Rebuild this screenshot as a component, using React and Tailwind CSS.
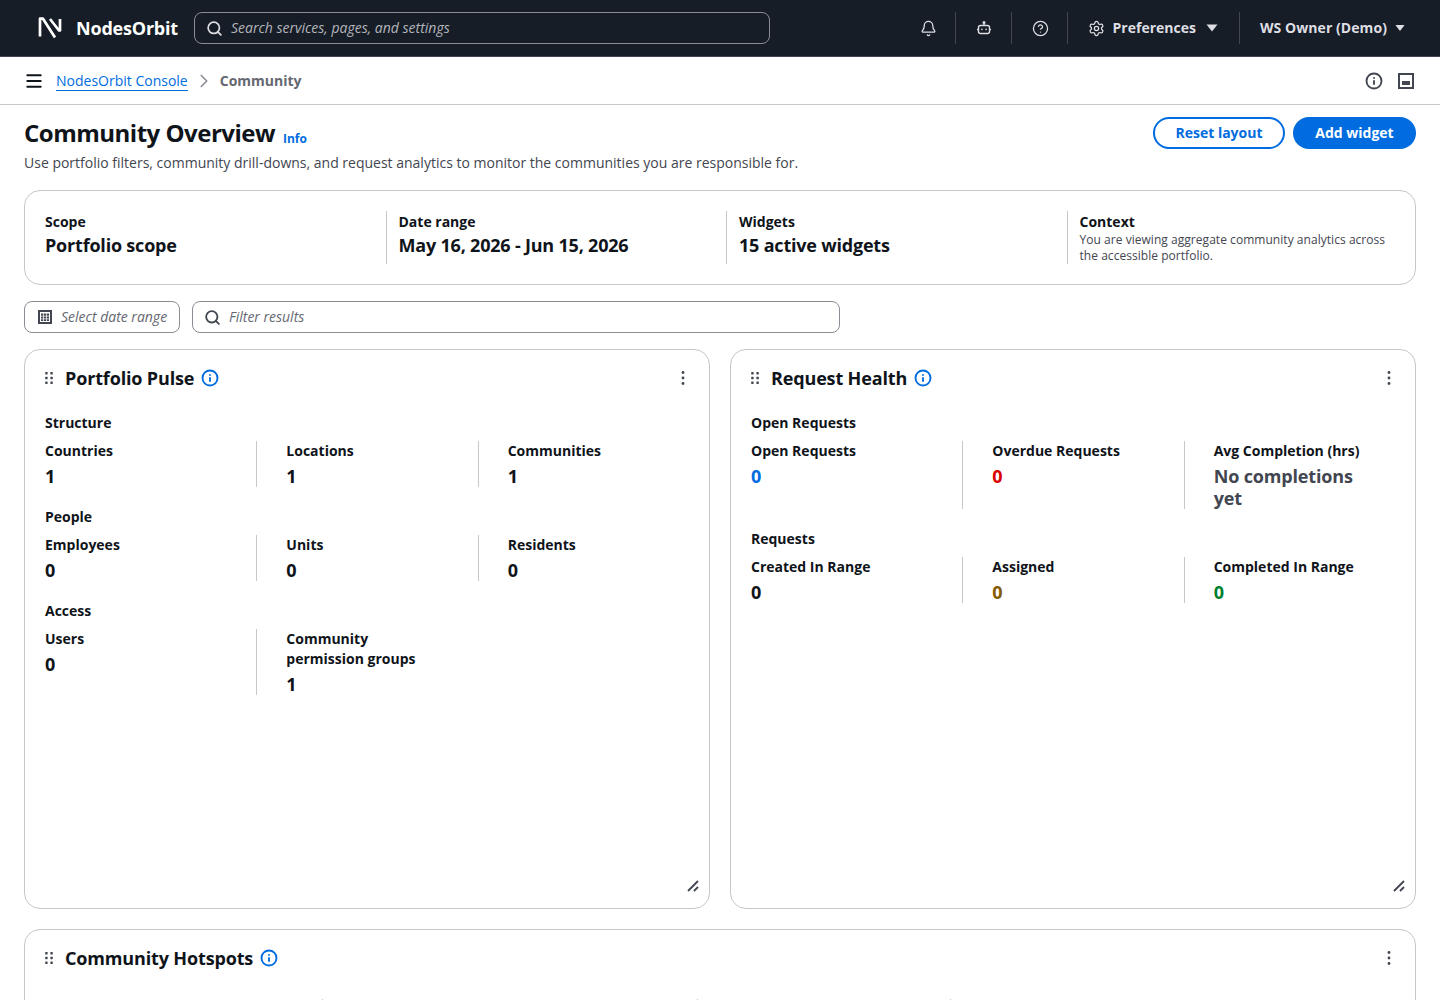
import { Bell, CircleHelp, Menu, Search, Settings, ChevronRight, Info } from 'lucide-react';

const NavDivider = () => <div className="h-8 w-px bg-[#424650]" />;

const Caret = ({ className }) => (
    <svg viewBox="0 0 12 8" className={className} fill="currentColor">
        <path d="M0.5 0.5h11L6 7.5z" />
    </svg>
);

const Logo = () => (
    <svg viewBox="0 0 24 22" className="h-[22px] w-6" fill="none" stroke="white" strokeWidth="2.7" strokeLinejoin="round">
        <path d="M2 19.5V1.7h3L17 20.5" />
        <path d="M12 2l9 11.5h1V2" />
    </svg>
);

const BotIcon = () => (
    <svg viewBox="0 0 16 16" className="ml-5 h-4 w-4" fill="none" stroke="currentColor" strokeWidth="1.4">
        <rect x="2.5" y="5.5" width="11" height="8" rx="2" />
        <path d="M8 2.5v3M1 9.5h1.5M13.5 9.5H15" />
        <circle cx="8" cy="2.5" r="0.8" fill="currentColor" />
        <rect x="5.2" y="8.6" width="1.4" height="1.6" fill="currentColor" stroke="none" />
        <rect x="9.4" y="8.6" width="1.4" height="1.6" fill="currentColor" stroke="none" />
    </svg>
);

const TopNav = () => (
    <div className="flex h-[57px] items-center border-b border-[#424650] bg-[#161d26] pl-[38px] pr-[35px]">
        <Logo />
        <span className="ml-[14px] text-[18px] font-bold tracking-[-0.2px] text-white">NodesOrbit</span>
        <div className="ml-4 flex h-8 w-[576px] items-center rounded-lg border border-[#8c8c94] pl-[11px]">
            <Search size={17} strokeWidth={2.4} className="text-[#dedee3]" />
            <span className="ml-2 text-sm italic text-[#b4b4bb]">Search services, pages, and settings</span>
        </div>
        <div className="ml-auto flex items-center text-[#dedee3]">
            <Bell size={17} strokeWidth={1.8} />
            <div className="ml-[18px]"><NavDivider /></div>
            <BotIcon />
            <div className="ml-[19px]"><NavDivider /></div>
            <CircleHelp size={17} strokeWidth={1.8} className="ml-[20px]" />
            <div className="ml-[18px]"><NavDivider /></div>
            <Settings size={17} strokeWidth={1.8} className="ml-[20px]" />
            <span className="ml-2 text-sm font-bold">Preferences</span>
            <Caret className="ml-[10px] h-2 w-3" />
            <div className="ml-[21px]"><NavDivider /></div>
            <span className="ml-5 text-sm font-bold tracking-[0.07px]">WS Owner (Demo)</span>
            <Caret className="ml-2 h-2 w-2.5" />
        </div>
    </div>
);

const Breadcrumbs = () => (
    <div className="flex h-[48px] items-center border-b border-[#c6c6cd] pl-[26px] pr-[26px] text-sm">
        <Menu size={16} strokeWidth={2.4} className="scale-125 text-[#0f141a]" />
        <a className="ml-[14px] border-b border-[#006ce0] pt-0.5 leading-[18px] text-[#006ce0]">NodesOrbit Console</a>
        <ChevronRight size={22} strokeWidth={1.8} className="ml-[5px] text-[#8c8c94]" />
        <span className="ml-[5px] font-bold text-[#656871]">Community</span>
        <Info size={18} strokeWidth={2.5} className="ml-auto text-[#424650]" />
        <div className="ml-[15px] flex h-4 w-4 items-end border-2 border-[#424650] p-0.5">
            <div className="h-1 w-full bg-[#424650]" />
        </div>
    </div>
);

const SummaryCell = ({ label, value, first }) => (
    <div className={first ? '' : 'border-l border-[#c6c6cd] pl-3'}>
        <div className="pt-px text-sm font-bold leading-5 text-[#0f141a]">{label}</div>
        <div className="mt-0.5 text-[18px] font-bold leading-[22px] tracking-[-0.2px] text-[#0f141a]">{value}</div>
    </div>
);

const DragHandle = () => (
    <svg viewBox="0 0 16 16" className="-ml-1 h-4 w-4 text-[#424650]" fill="currentColor">
        <rect x="4.2" y="2" width="2.4" height="2.4" rx="0.4" /><rect x="9.4" y="2" width="2.4" height="2.4" rx="0.4" />
        <rect x="4.2" y="6.8" width="2.4" height="2.4" rx="0.4" /><rect x="9.4" y="6.8" width="2.4" height="2.4" rx="0.4" />
        <rect x="4.2" y="11.6" width="2.4" height="2.4" rx="0.4" /><rect x="9.4" y="11.6" width="2.4" height="2.4" rx="0.4" />
    </svg>
);

const Kebab = () => (
    <svg viewBox="0 0 16 16" className="h-4 w-4 text-[#424650]" fill="currentColor">
        <circle cx="8" cy="2.5" r="1.4" /><circle cx="8" cy="8" r="1.4" /><circle cx="8" cy="13.5" r="1.4" />
    </svg>
);

const WidgetHeader = ({ title }) => (
    <div className="flex h-[20px] items-center">
        <DragHandle />
        <h3 className="ml-2 text-[18px] font-bold leading-[22px] tracking-[-0.15px] text-[#0f141a]">{title}</h3>
        <Info size={18} strokeWidth={2.5} className="ml-[7px] text-[#006ce0]" />
        <div className="ml-auto mr-[-2px]"><Kebab /></div>
    </div>
);

const Metric = ({ label, value, color = 'text-[#0f141a]', index }) => (
    <div className={index === 0 ? 'pl-2.5 pr-9' : 'border-l border-[#c6c6cd] pl-[29px] pr-9'}>
        <div className="text-sm font-bold leading-5 text-[#0f141a]">{label}</div>
        <div className={`mt-1 text-[18px] font-bold leading-[22px] tracking-[-0.15px] ${color}`}>{value}</div>
    </div>
);

const Section = ({ title, metrics }) => (
    <div className="mb-5">
        <div className="mb-2 text-sm font-bold leading-5 text-[#0f141a]">{title}</div>
        <div className="-mx-2.5 grid grid-cols-3">
            {metrics.map((m, i) => <Metric key={m.label} index={i} {...m} />)}
        </div>
    </div>
);

const ResizeHandle = () => (
    <svg viewBox="0 0 12 12" className="absolute bottom-4 right-[10px] h-3 w-3 text-[#424650]" stroke="currentColor" strokeWidth="1.8">
        <path d="M1 11L11 1M7 11l4-4" />
    </svg>
);

const Widget = ({ title, sections }) => (
    <div className="relative h-[560px] rounded-2xl border border-[#c6c6cd] bg-white px-5 pt-[18px]">
        <WidgetHeader title={title} />
        <div className="mt-[25px]">
            {sections.map((s) => <Section key={s.title} {...s} />)}
        </div>
        <ResizeHandle />
    </div>
);

const portfolio = [
    { title: 'Structure', metrics: [{ label: 'Countries', value: '1' }, { label: 'Locations', value: '1' }, { label: 'Communities', value: '1' }] },
    { title: 'People', metrics: [{ label: 'Employees', value: '0' }, { label: 'Units', value: '0' }, { label: 'Residents', value: '0' }] },
    { title: 'Access', metrics: [{ label: 'Users', value: '0' }, { label: 'Community permission groups', value: '1' }] },
];

const requests = [
    {
        title: 'Open Requests',
        metrics: [
            { label: 'Open Requests', value: '0', color: 'text-[#006ce0]' },
            { label: 'Overdue Requests', value: '0', color: 'text-[#db0000]' },
            { label: 'Avg Completion (hrs)', value: 'No completions yet', color: 'text-[#424650]' },
        ],
    },
    {
        title: 'Requests',
        metrics: [
            { label: 'Created In Range', value: '0' },
            { label: 'Assigned', value: '0', color: 'text-[#855900]' },
            { label: 'Completed In Range', value: '0', color: 'text-[#00802f]' },
        ],
    },
];

export default function App() {
    return (
        <div className="h-screen overflow-hidden bg-white font-['Open_Sans',sans-serif] text-[#0f141a]">
            <TopNav />
            <Breadcrumbs />
            <div className="px-6">
                <div className="flex items-start justify-between pt-3">
                    <div>
                        <div className="flex items-baseline">
                            <h1 className="text-2xl font-bold leading-[32px] tracking-[-0.5px]">Community Overview</h1>
                            <a className="ml-2 translate-y-px text-xs font-bold text-[#006ce0]">Info</a>
                        </div>
                        <p className="mt-1 text-sm leading-5 text-[#424650]">
                            Use portfolio filters, community drill-downs, and request analytics to monitor the communities you are responsible for.
                        </p>
                    </div>
                    <div className="flex gap-2">
                        <button className="h-8 w-[132px] rounded-full border-2 border-[#006ce0] text-sm font-bold text-[#006ce0]">Reset layout</button>
                        <button className="h-8 w-[123px] rounded-full bg-[#006ce0] text-sm font-bold text-white">Add widget</button>
                    </div>
                </div>

                <div className="mt-[17px] h-[95px] rounded-2xl border border-[#c6c6cd] px-5 py-5">
                    <div className="grid h-[53px] grid-cols-4 gap-3">
                        <SummaryCell first label="Scope" value="Portfolio scope" />
                        <SummaryCell label="Date range" value="May 16, 2026 - Jun 15, 2026" />
                        <SummaryCell label="Widgets" value="15 active widgets" />
                        <div className="border-l border-[#c6c6cd] pl-3">
                            <div className="pt-px text-sm font-bold leading-5">Context</div>
                            <p className="text-xs leading-4 tracking-[0.04px] text-[#424650]">
                                You are viewing aggregate community analytics across the accessible portfolio.
                            </p>
                        </div>
                    </div>
                </div>

                <div className="mt-4 flex gap-3">
                    <div className="flex h-8 w-[156px] items-center rounded-lg border border-[#8c8c94] pl-3">
                        <svg viewBox="0 0 16 16" className="h-4 w-4 text-[#424650]" fill="currentColor">
                            <path fillRule="evenodd" d="M1 1h14v14H1zM3 3v10h10V3z" />
                            <path d="M4 4.5h2.2v2.2H4zM6.9 4.5h2.2v2.2H6.9zM9.8 4.5H12v2.2H9.8zM4 7.4h2.2v2.2H4zM6.9 7.4h2.2v2.2H6.9zM9.8 7.4H12v2.2H9.8zM4 10.2h2.2v1.8H4zM6.9 10.2h2.2v1.8H6.9zM9.8 10.2H12v1.8H9.8z" />
                        </svg>
                        <span className="ml-2 text-sm italic text-[#656871]">Select date range</span>
                    </div>
                    <div className="flex h-8 w-[648px] items-center rounded-lg border border-[#8c8c94] pl-[11px]">
                        <Search size={17} strokeWidth={2.6} className="text-[#424650]" />
                        <span className="ml-2 text-sm italic text-[#656871]">Filter results</span>
                    </div>
                </div>

                <div className="mt-4 grid grid-cols-2 gap-5">
                    <Widget title="Portfolio Pulse" sections={portfolio} />
                    <Widget title="Request Health" sections={requests} />
                </div>

                <div className="mt-5 h-[300px] rounded-t-2xl border border-[#c6c6cd] px-5 pt-[18px]">
                    <WidgetHeader title="Community Hotspots" />
                    <div className="relative mt-[31px]">
                        <div className="absolute left-[277px] top-0 h-10 w-px bg-[#c6c6cd]" />
                        <div className="absolute left-[652px] top-0 h-10 w-px bg-[#c6c6cd]" />
                        <div className="absolute left-[905px] top-0 h-10 w-px bg-[#c6c6cd]" />
                    </div>
                </div>
            </div>
        </div>
    );
}
